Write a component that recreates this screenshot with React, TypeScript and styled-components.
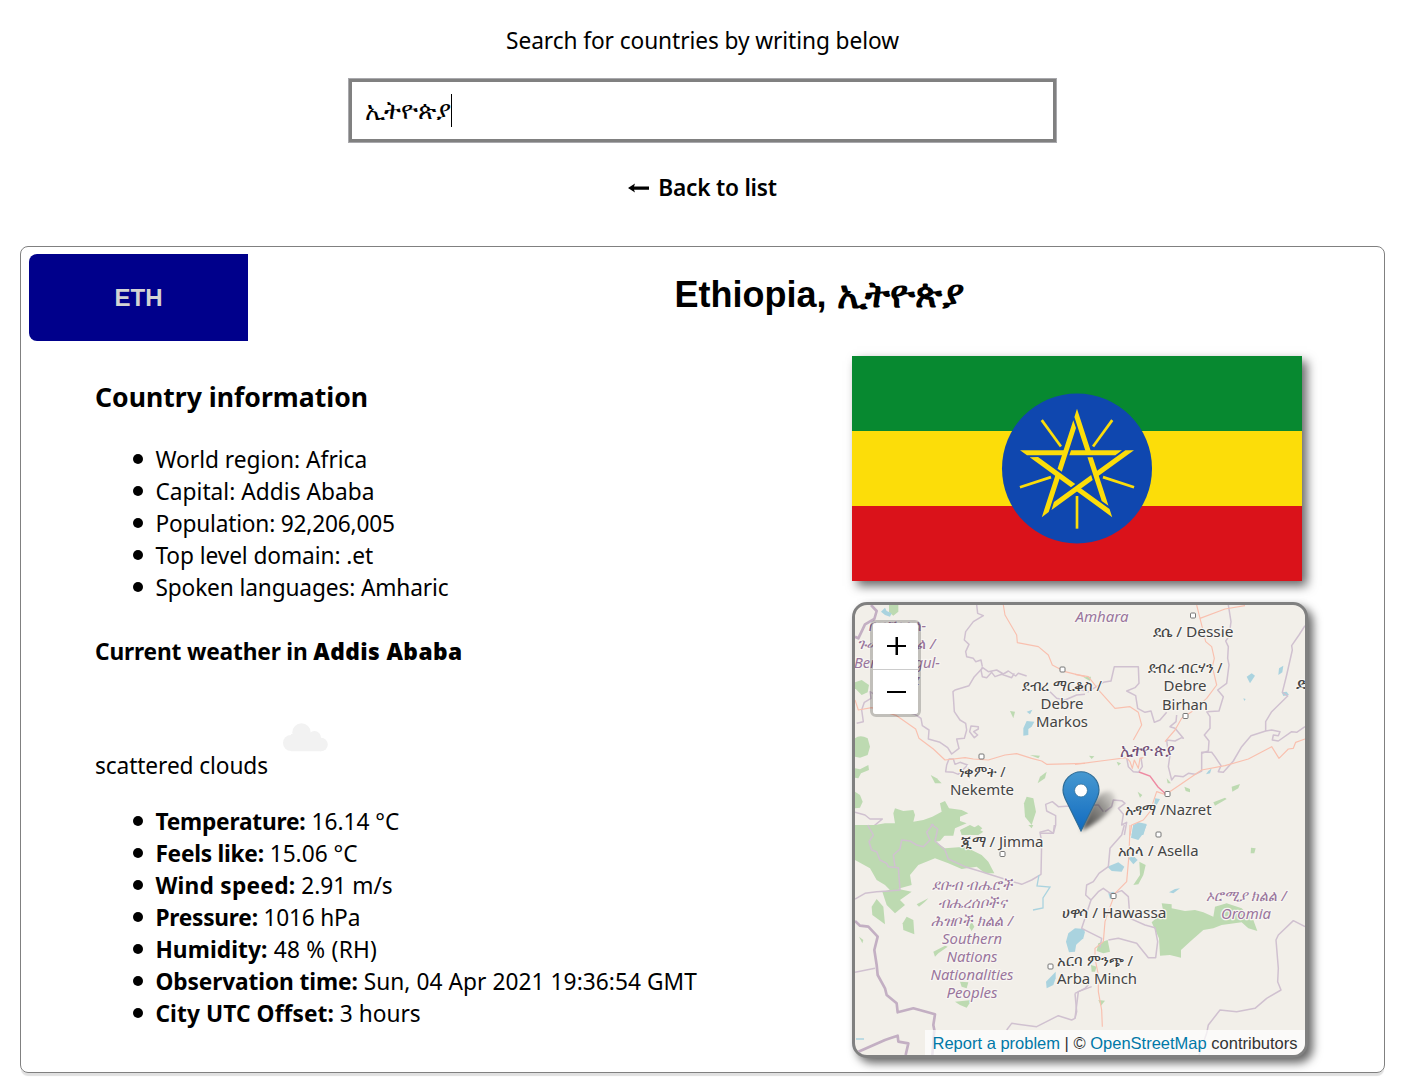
import React from 'react';
import styled, { createGlobalStyle } from 'styled-components';

const ui = `'Noto Sans', 'Open Sans', sans-serif`;
const arial = `'Liberation Sans', Arial, sans-serif`;

const Global = createGlobalStyle`
  * { box-sizing: border-box; }
  body { margin: 0; background: #fff; color: #000; font: 22.7px/32px ${ui}; overflow: hidden; }
  ul, h1, h2, h3, p { margin: 0; padding: 0; }
`;

const Page = styled.div`
  display: flex;
  flex-direction: column;
  align-items: center;
  padding: 25px 20px 0;
  height: 1084px;
`;
const Fit = styled.span<{ $ls?: number; $weight?: number }>`
  letter-spacing: ${p => p.$ls ?? 0}px;
  font-weight: ${p => p.$weight ?? 'inherit'};
  white-space: pre;
`;
const SearchBox = styled.div`
  display: flex;
  align-items: center;
  width: 709px;
  height: 65px;
  margin: 21px 0 29px;
  padding-left: 13px;
  border: 4px solid #808080;
  outline: 1px solid #a9a9ad;
  outline-offset: -1px;
`;
const Caret = styled.span`
  width: 1px;
  height: 33px;
  background: #000;
`;
const Typed = styled.span`
  width: 86px;
  padding-bottom: 3px;
  font-size: 25.2px;
  white-space: nowrap;
`;
const Back = styled.div`
  display: flex;
  align-items: center;
  gap: 8px;
  font-weight: 600;
  height: 32px;
`;
const Card = styled.article`
  width: 1365px;
  height: 827px;
  margin-top: 42px;
  padding: 7px 8px;
  border: 1px solid #808080;
  border-radius: 8px;
  box-shadow: 0 4px 1px -1px #e0e0e0;
`;
const CardHead = styled.header`
  display: flex;
  height: 87px;
`;
const Code = styled.div`
  display: grid;
  place-items: center;
  width: 219px;
  background: #00008b;
  color: #d3d3d3;
  border-radius: 8px 0 0 8px;
  font: bold 24px ${arial};
`;
const Title = styled.h1`
  flex: 1;
  padding: 20px 0 0 14px;
  text-align: center;
  font: bold 36px/41px ${arial};
  white-space: nowrap;
`;
const Native = styled.span`
  font-size: 37.4px;
  line-height: 1;
`;
const Columns = styled.div`
  display: flex;
  justify-content: space-between;
  padding: 15px 68px 0 66px;
`;
const Info = styled.section`
  padding-top: 24px;
`;
const InfoTitle = styled.h2`
  margin-top: -1px;
  font: bold 26.6px/36px ${ui};
`;
const WeatherTitle = styled.h3`
  margin-top: 32px;
  font: bold 22.7px/32px ${ui};
`;
const List = styled.ul<{ $top: number }>`
  margin-top: ${p => p.$top}px;
  list-style: none;
`;
const Item = styled.li`
  display: flex;
  align-items: center;
  height: 32px;
  &::before {
    content: '';
    width: 10px;
    height: 10px;
    margin: 0 12.4px 2px 38px;
    border-radius: 50%;
    background: #000;
  }
`;
const CloudRow = styled.div`
  height: 82px;
  padding: 55px 0 0 188px;
  svg { display: block; }
`;
const Media = styled.aside`
  display: flex;
  flex-direction: column;
  gap: 21px;
  width: 456px;
`;
const Flag = styled.svg`
  display: block;
  width: 450px;
  height: 225px;
  box-shadow: 5px 5px 10px #666;
`;
const MapFrame = styled.div`
  position: relative;
  width: 456px;
  height: 456px;
  border: 3px solid #808080;
  border-radius: 15px;
  background: #f2efe9;
  overflow: hidden;
  box-shadow: 5px 5px 10px #666;
`;
const MapSvg = styled.svg`
  display: block;
  font-family: ${ui};
`;
const Zoom = styled.div`
  position: absolute;
  left: 15px;
  top: 15px;
  width: 51px;
  height: 97px;
  border: 3px solid rgba(0, 0, 0, 0.2);
  background-clip: padding-box;
  border-radius: 6px;
  overflow: hidden;
`;
const ZoomButton = styled.div`
  display: grid;
  place-items: center;
  height: 46px;
  padding-left: 2px;
  background: #fff;
  & + & { height: 45px; border-top: 1px solid #ccc; }
`;
const Credit = styled.div`
  position: absolute;
  right: 0;
  bottom: 0;
  height: 25px;
  padding: 0 7.5px;
  background: rgba(255, 255, 255, 0.7);
  color: #333;
  font: 16.5px/26px ${arial};
  white-space: nowrap;
  b { color: #0078a8; font-weight: normal; }
`;

const facts: [string, number][] = [
  ['World region: Africa', 0],
  ['Capital: Addis Ababa', 0.03],
  ['Population: 92,206,005', -0.2],
  ['Top level domain: .et', -0.08],
  ['Spoken languages: Amharic', -0.13],
];
const weather: [string, string, number, number][] = [
  ['Temperature:', '16.14 °C', -0.2, 0],
  ['Feels like:', '15.06 °C', -0.25, 0],
  ['Wind speed:', '2.91 m/s', 0.25, 0],
  ['Pressure:', '1016 hPa', -0.23, -0.2],
  ['Humidity:', '48 % (RH)', 0.1, 0.25],
  ['Observation time:', 'Sun, 04 Apr 2021 19:36:54 GMT', -0.1, 0.06],
  ['City UTC Offset:', '3 hours', 0.1, 0],
];

const EthiopiaFlag = () => (
  <Flag viewBox="0 0 1350 675">
    <rect width="1350" height="225" fill="#078930" />
    <rect y="225" width="1350" height="225" fill="#fcdd09" />
    <rect y="450" width="1350" height="225" fill="#da121a" />
    <circle cx="675" cy="337.5" r="225" fill="#0f47af" />
    <g transform="translate(-21 -33)" fill="#fcdd09">
      {[0, 72, 144, 216, 288].map(a => (
        <g key={a} transform={`rotate(${a} 696 371)`}>
          <path d="M525 315.500H661L656 330.500H546ZM678 315.500H831L811 330.500H673Z" />
          <path d="M692 453h8v98h-8z" />
        </g>
      ))}
    </g>
  </Flag>
);

// Line work is surveyed in four 240px tiles, three units to a pixel.
const tiles = [
  {
    at: [845, 595],
    woods: [
      'M30 430Q45 418 68 430L75 455L68 480L45 488L30 485Z',
      'M30 262L50 255L72 270L68 292L50 300L30 280Z',
      'M132 30H160V50L145 62L132 52Z',
      'M30 520L45 523L70 510L72 525L48 535L40 550L30 548Z',
      'M30 590L45 600L53 620L45 638L30 640Z',
      'M145 655L150 640L175 648L205 645L210 660L205 680L235 675L262 665L290 650L285 625L300 618L312 640L350 645L370 655L345 665L345 678L365 685L330 700L325 722H30V700L60 705L90 690L120 685L150 685Z',
      'M545 605L565 610L573 650L560 690L540 665L537 625Z',
      'M257 540L275 550L290 565L270 565Z', 'M605 530L600 550L578 565L585 545Z',
      'M495 348L510 350L505 370Z', 'M555 480L585 482L580 490Z', 'M345 705L375 690L415 710L400 720H350Z',
    ],
    lakes: ['M545 378L568 380L560 395L550 402V420L535 422V400Z', 'M120 38L125 48L140 55L135 65L120 60L108 50Z', 'M545 350L562 344L555 358Z'],
    borders: [
      'M395 30L398 55L415 62L385 80L362 110L358 135L372 148L362 170L365 185L385 190L392 200L408 195L412 215',
      'M545 243L520 235L512 243L490 228L475 237L455 225L430 230L412 217L408 225L412 245L425 248L440 232L450 245L470 238L500 248L508 235',
      'M412 220L388 245L372 272L330 285L324 290L328 350L345 375L362 385L365 405L358 430L335 432L342 460L320 477L308 458L285 442L250 432L252 405L232 392L228 370L210 358L160 345L75 290L78 310L58 322L50 345L55 380L35 385',
      'M400 395L378 393L374 410L388 428L398 420L386 410L400 402Z',
      'M312 492L305 510L302 530L325 532L340 538L368 510L345 502L330 508L325 492Z',
      'M30 652L60 660L75 672L112 672L78 700L72 722',
      'M585 715L625 715L632 690L632 662L605 648L602 628L622 620L640 635L690 632',
      'M245 722L242 700L262 688L282 705L280 722',
      'M615 290L635 310L660 315L695 300L720 298',
    ],
    thick: ['M78 30L95 48L88 72L60 88L40 130L30 125'],
    roads: [
      'M30 315L40 345L80 338L155 362L212 402L222 430L265 462L300 495L360 488L385 492L430 495L480 480L515 476L560 490L590 498L605 508L720 505',
      'M475 30L480 60L515 120L517 143L580 155L610 180L622 210L660 230L720 245',
    ],
  },
  {
    at: [1075, 595],
    woods: ['M470 575L495 567L490 580L472 590Z', 'M328 575L345 582L345 592L332 588Z', 'M415 622L450 608L455 612L420 632Z', 'M188 590L202 600L195 608Z', 'M125 500L138 505L130 512Z', 'M25 247L48 245L45 258Z', 'M42 482L58 484L50 492Z', 'M275 550L288 565L278 565Z'],
    lakes: ['M515 245L530 235L540 242L525 265Z', 'M612 220L625 212L622 232L610 240Z', 'M620 292L635 290L642 300L625 303Z', 'M400 528L410 520L405 535L393 538Z', 'M240 610L255 612L245 630L238 628Z', 'M175 690L190 682L215 687L205 720H170Z', 'M505 310L512 312L508 318Z'],
    borders: [
      'M690 92L672 120L650 152L652 165L635 240L622 292L638 303L590 350L572 380L572 408L590 405L615 410L610 422L595 420L592 435L610 438L650 410L665 412L690 395',
      'M572 408L528 422L500 455L475 498L445 532L430 530L438 512L420 485L410 472L380 472V528L360 538L340 535L325 545L300 542L290 555L280 515L285 480L278 460L275 435L300 438L320 428L325 430L300 400L285 395L303 380L305 360',
      'M460 30L468 80L462 125L452 138L460 155L458 190L462 210L455 265L428 285L445 305L432 348L395 350L405 365L405 400L388 420L402 438L400 468L380 475',
      'M0 280L40 290L85 262L108 258L118 215L190 215L192 265L180 278L155 288L182 302L188 340L210 352L228 348L238 382L255 375L275 352',
      'M90 650L110 635L115 615L140 617L150 625L130 640L145 658L140 690L155 682L148 720',
      'M155 488L160 515L175 530L190 532L202 515L198 488',
      'M40 630L70 630L85 650',
    ],
    thick: [],
    roads: [
      'M510 32L450 42L375 70L365 30', 'M375 70L385 110L392 140L410 155L418 190L412 215L425 270L395 310L350 350L320 370L300 405L270 440',
      'M0 238L40 245L75 290L120 340L165 335L190 352L200 390L175 435',
      'M0 508L100 495L155 488L165 500L172 520L178 495L190 520L195 490L205 488',
      'M270 600L380 525L450 512L520 492L590 455L612 490L640 462L655 460L662 442L690 432',
      'M270 598L245 590L225 650L205 675L170 690L165 722',
    ],
  },
  {
    at: [845, 825],
    woods: [
      'M30 0H310L300 30L285 48L270 50L300 70L360 65L410 90L430 110L448 145L420 145L395 125L350 132L310 115L270 100L220 120L195 150L200 180L165 190L140 200L120 180L95 165L75 130L30 105Z',
      'M112 200L150 190L200 200L165 225L180 240L150 265L125 240Z', 'M95 222L115 245L120 298L82 270L80 245Z', 'M185 275L205 285L208 328L175 315L173 295Z',
      'M375 15L400 0L412 10L400 20Z', 'M215 238L250 220L240 230L222 245Z', 'M265 380L300 362L308 365L280 385L270 395Z',
      'M42 335L55 345L52 355Z', 'M330 530L380 525L365 548L345 540Z', 'M372 305L380 290L388 305L380 318Z', 'M345 470L370 472L365 490L350 485Z', 'M550 0H565L560 10Z',
    ],
    lakes: ['M670 325L690 310L720 312L715 335L695 350L690 380L672 382L663 350Z', 'M603 470L632 440L632 460L625 480L605 490Z'],
    borders: [
      'M68 0L85 30L72 50L80 75L95 80L105 105L125 115L130 125L160 128L165 195L130 198L95 200L60 205L30 222',
      'M150 125L145 90L165 72L170 45L195 48L215 60L235 65L255 45L245 22L262 0L278 12L270 48L300 75L310 102L360 125L410 140L440 150L530 178L560 165L588 148L590 50L585 22L610 15L625 25L628 0',
      'M30 442L90 430', 'M485 615L500 595L575 605L640 572L680 585L690 580L700 500L740 485',
    ],
    thick: ['M30 288L45 302L70 305L98 335L88 375L95 420L98 450L120 490L125 510L155 535L158 562L205 550L270 568L265 600L268 615L262 690', 'M30 685L120 645L135 640L158 632L160 650L190 655L182 690'],
    roads: [],
  },
  {
    at: [1075, 825],
    woods: ['M230 292L265 260L260 235L290 238L290 250L330 258L360 255L385 262L415 275L420 245L455 235L500 250L535 285L547 318L520 310L500 292L440 300L415 310L385 315L345 350L318 375V398L285 390L255 392L252 340Z', 'M193 110L212 120L205 150L190 178L175 180L195 150Z', 'M70 355L98 345L105 380L85 385L65 378Z', 'M528 68L542 70L538 85H527Z', 'M70 525L90 527L78 542Z', 'M48 420L65 425L60 440L50 440Z'],
    lakes: ['M175 0H215L205 25L190 45L168 38Z', 'M97 125L130 112L148 125L140 140L110 138Z', 'M160 100L175 92L188 105L175 118Z', 'M100 205L115 200L125 210L105 222Z', 'M0 312L30 320L25 340L0 362Z', 'M282 202L300 192L315 190L295 205Z'],
    borders: [
      'M148 0L140 30L105 70L100 125L72 145L55 170L35 180L32 210L48 225L30 280L20 310L80 340L75 368',
      'M48 225L70 200L85 190L110 208L140 197L160 215L165 280L210 300L240 308L248 350L242 398L220 398L185 355L160 348L130 340L100 345',
      'M690 305L655 287L610 330L603 345L610 430L608 470L618 495L575 520L540 550L485 560L435 555L400 600L395 625L372 690',
      'M0 505L30 490L40 480L30 470', 'M0 505L5 560L0 580',
    ],
    thick: [],
    roads: ['M165 0L162 90L155 170L120 205L100 260L90 290L85 350L60 370V400L70 450L70 500L80 555L82 605'],
  },
];

type Label = [string, number, number, number, string?];
const labels: Label[] = [
  ['Amhara', 1102, 621.5, 53, 'r'],
  ['ደሴ / Dessie', 1193, 636.5, 81], ['ደብረ ብርሃን /', 1185, 673, 75], ['Debre', 1185, 691, 43], ['Birhan', 1185, 709.5, 46],
  ['ደብረ ማርቆስ /', 1062, 691, 80], ['Debre', 1062, 709, 43], ['Markos', 1062, 727, 52],
  ['ኢትዮጵያ', 1147, 755.5, 55, 'c'], ['ነቀምት /', 982, 777, 47], ['Nekemte', 982, 795, 64],
  ['አዳማ /Nazret', 1168, 815, 87], ['ጂማ / Jimma', 1002, 847, 83], ['አሰላ / Asella', 1158, 856, 81], ['ሀዋሳ / Hawassa', 1114, 918, 105],
  ['ኦሮሚያ ክልል /', 1246, 901, 81, 'r'], ['Oromia', 1246, 919, 50, 'r'],
  ['ደቡብ ብሔሮች', 972, 889.5, 80, 'r'], ['ብሔረሰቦችና', 972, 907.5, 69, 'r'], ['ሕዝቦች ክልል /', 972, 925.5, 82, 'r'],
  ['Southern', 972, 944, 60, 'r'], ['Nations', 972, 962, 51, 'r'], ['Nationalities', 972, 980, 83, 'r'], ['Peoples', 972, 998, 51, 'r'],
  ['አርባ ምንጭ /', 1095, 966, 76], ['Arba Minch', 1097, 984, 80],
  ['ቤንሻንጉል-', 897, 631, 58, 'r'], ['ጉሙዝ ክልል /', 896, 649, 79, 'r'], ['Benishangul-', 897, 668, 86, 'r'], ['Gumuz', 899, 685, 42, 'r'], ['ድ', 1302, 689, 12],
];
const towns = [[1193, 615.5], [1062.500, 669.5], [981.5, 756.5], [1185.500, 716], [1167.5, 794], [1158.500, 834.5], [1002.500, 854], [1113.5, 896], [1050.500, 966.5]];

const CountryMap = () => (
  <MapSvg width="450" height="450" viewBox="855 605 450 450">
    <defs>
      <linearGradient id="pin" x1="0" y1="0" x2="0" y2="1">
        <stop offset="0" stopColor="#4698d0" />
        <stop offset="1" stopColor="#116bc0" />
      </linearGradient>
      <linearGradient id="fade" x1="0" y1="1" x2="1" y2="0">
        <stop offset="0" stopOpacity=".75" />
        <stop offset=".6" stopOpacity=".4" />
        <stop offset="1" stopOpacity=".05" />
      </linearGradient>
      <filter id="soft" x="-30%" y="-30%" width="160%" height="160%"><feGaussianBlur stdDeviation="2" /></filter>
    </defs>
    {tiles.map((t, i) => (
      <g key={i} transform={`translate(${t.at[0]} ${t.at[1]}) scale(.33333)`} fill="none" strokeLinejoin="round">
        {t.woods.map(d => <path key={d} d={d} fill="#bddab1" />)}
        {t.lakes.map(d => <path key={d} d={d} fill="#aad3df" />)}
        {t.borders.map(d => <path key={d} d={d} stroke="#d0c1d0" strokeWidth="4.500" />)}
        {t.thick.map(d => <path key={d} d={d} stroke="#c3afc3" strokeWidth="8" />)}
        {t.roads.map(d => <path key={d} d={d} stroke="#f9c0af" strokeWidth="3.500" />)}
      </g>
    ))}
    <g fill="none">
      <path d="M1139 772L1150 776L1158 787L1167 795" stroke="#ee8aa2" strokeWidth="1.4" />
      <path d="M1039 875L1037 886L1050 887L1043 898L1043 908L1033 910M856 1039H864" stroke="#aad3df" strokeWidth="1.3" />
    </g>
    {towns.map(([x, y]) => <rect key={`${x}`} x={x - 2.5} y={y - 2.5} width="5" height="5" rx="1" fill="#fff" stroke="#777" />)}
    {labels.map(([text, x, y, w, kind], i) => (
      <text
        key={i} x={x} y={y} textAnchor="middle" fontSize={kind === 'c' ? 16.5 : 15} textLength={w} lengthAdjust="spacingAndGlyphs"
        fill={kind === 'c' ? '#714f77' : kind ? '#9a759d' : '#444'} fontStyle={kind === 'r' ? 'italic' : 'normal'}
        fontWeight={kind === 'c' ? 500 : 400}
        stroke="#f7f5f1" strokeWidth="2.500" strokeLinejoin="round" paintOrder="stroke"
      >{text}</text>
    ))}
    <path d="M1081 831L1091 806Q1099 791 1110 791Q1119 796 1112 808Q1102 821 1081 831Z" fill="url(#fade)" filter="url(#soft)" />
    <g transform="translate(1062.250 771) scale(1.5)">
      <path d="M12.500.5C5.900.5.5 6 .5 12.700C.5 16 1.900 18.500 3.200 21L12.500 40L21.800 21C23.100 18.500 24.500 16 24.500 12.700C24.500 6 19.100.5 12.500.5Z" fill="url(#pin)" stroke="#2e6c97" strokeWidth=".8" />
      <circle cx="12.500" cy="13" r="4.300" fill="#fff" stroke="#2e6c97" strokeWidth=".5" />
    </g>
  </MapSvg>
);

export default function App() {
  return (
    <Page>
      <Global />
      <p><Fit $ls={-0.08}>Search for countries by writing below</Fit></p>
      <SearchBox><Typed>ኢትዮጵያ</Typed><Caret /></SearchBox>
      <Back>
        <svg width="22" height="10" viewBox="0 0 22 10"><path d="M0 5L7 .5L6 3.500H21V6.800H6L7 9.500Z" /></svg>
        <Fit $ls={-0.22}>Back to list</Fit>
      </Back>
      <Card>
        <CardHead>
          <Code>ETH</Code>
          <Title>Ethiopia, <Native>ኢትዮጵያ</Native></Title>
        </CardHead>
        <Columns>
          <Info>
            <InfoTitle>Country information</InfoTitle>
            <List $top={29}>
              {facts.map(([text, ls]) => <Item key={text}><Fit $ls={ls}>{text}</Fit></Item>)}
            </List>
            <WeatherTitle><Fit $ls={-0.16}>Current weather in </Fit><Fit $ls={0.42} $weight={900}>Addis Ababa</Fit></WeatherTitle>
            <CloudRow>
              <svg width="45" height="29" viewBox="0 0 45 29" fill="#f2f2f2">
                <circle cx="8" cy="20" r="8" /><circle cx="18.500" cy="9.500" r="9.200" /><circle cx="31.500" cy="14.500" r="6.500" /><circle cx="38" cy="21.500" r="6.800" />
                <path d="M8 11H35L38 28.300H8Z" />
              </svg>
            </CloudRow>
            <p><Fit $ls={-0.1}>scattered clouds</Fit></p>
            <List $top={24}>
              {weather.map(([name, value, a, b]) => (
                <Item key={name}><Fit $weight={700} $ls={a}>{name}</Fit><Fit $ls={b}>{` ${value}`}</Fit></Item>
              ))}
            </List>
          </Info>
          <Media>
            <EthiopiaFlag />
            <MapFrame>
              <CountryMap />
              <Zoom>
                <ZoomButton><svg width="19" height="18" viewBox="0 0 19 18"><path d="M0 8h19v2H0zM8.500 0h2.500v18h-2.500z" /></svg></ZoomButton>
                <ZoomButton><svg width="19" height="18" viewBox="0 0 19 18"><path d="M0 8h19v2H0z" /></svg></ZoomButton>
              </Zoom>
              <Credit><b>Report a problem</b> | © <b>OpenStreetMap</b> contributors</Credit>
            </MapFrame>
          </Media>
        </Columns>
      </Card>
    </Page>
  );
}
